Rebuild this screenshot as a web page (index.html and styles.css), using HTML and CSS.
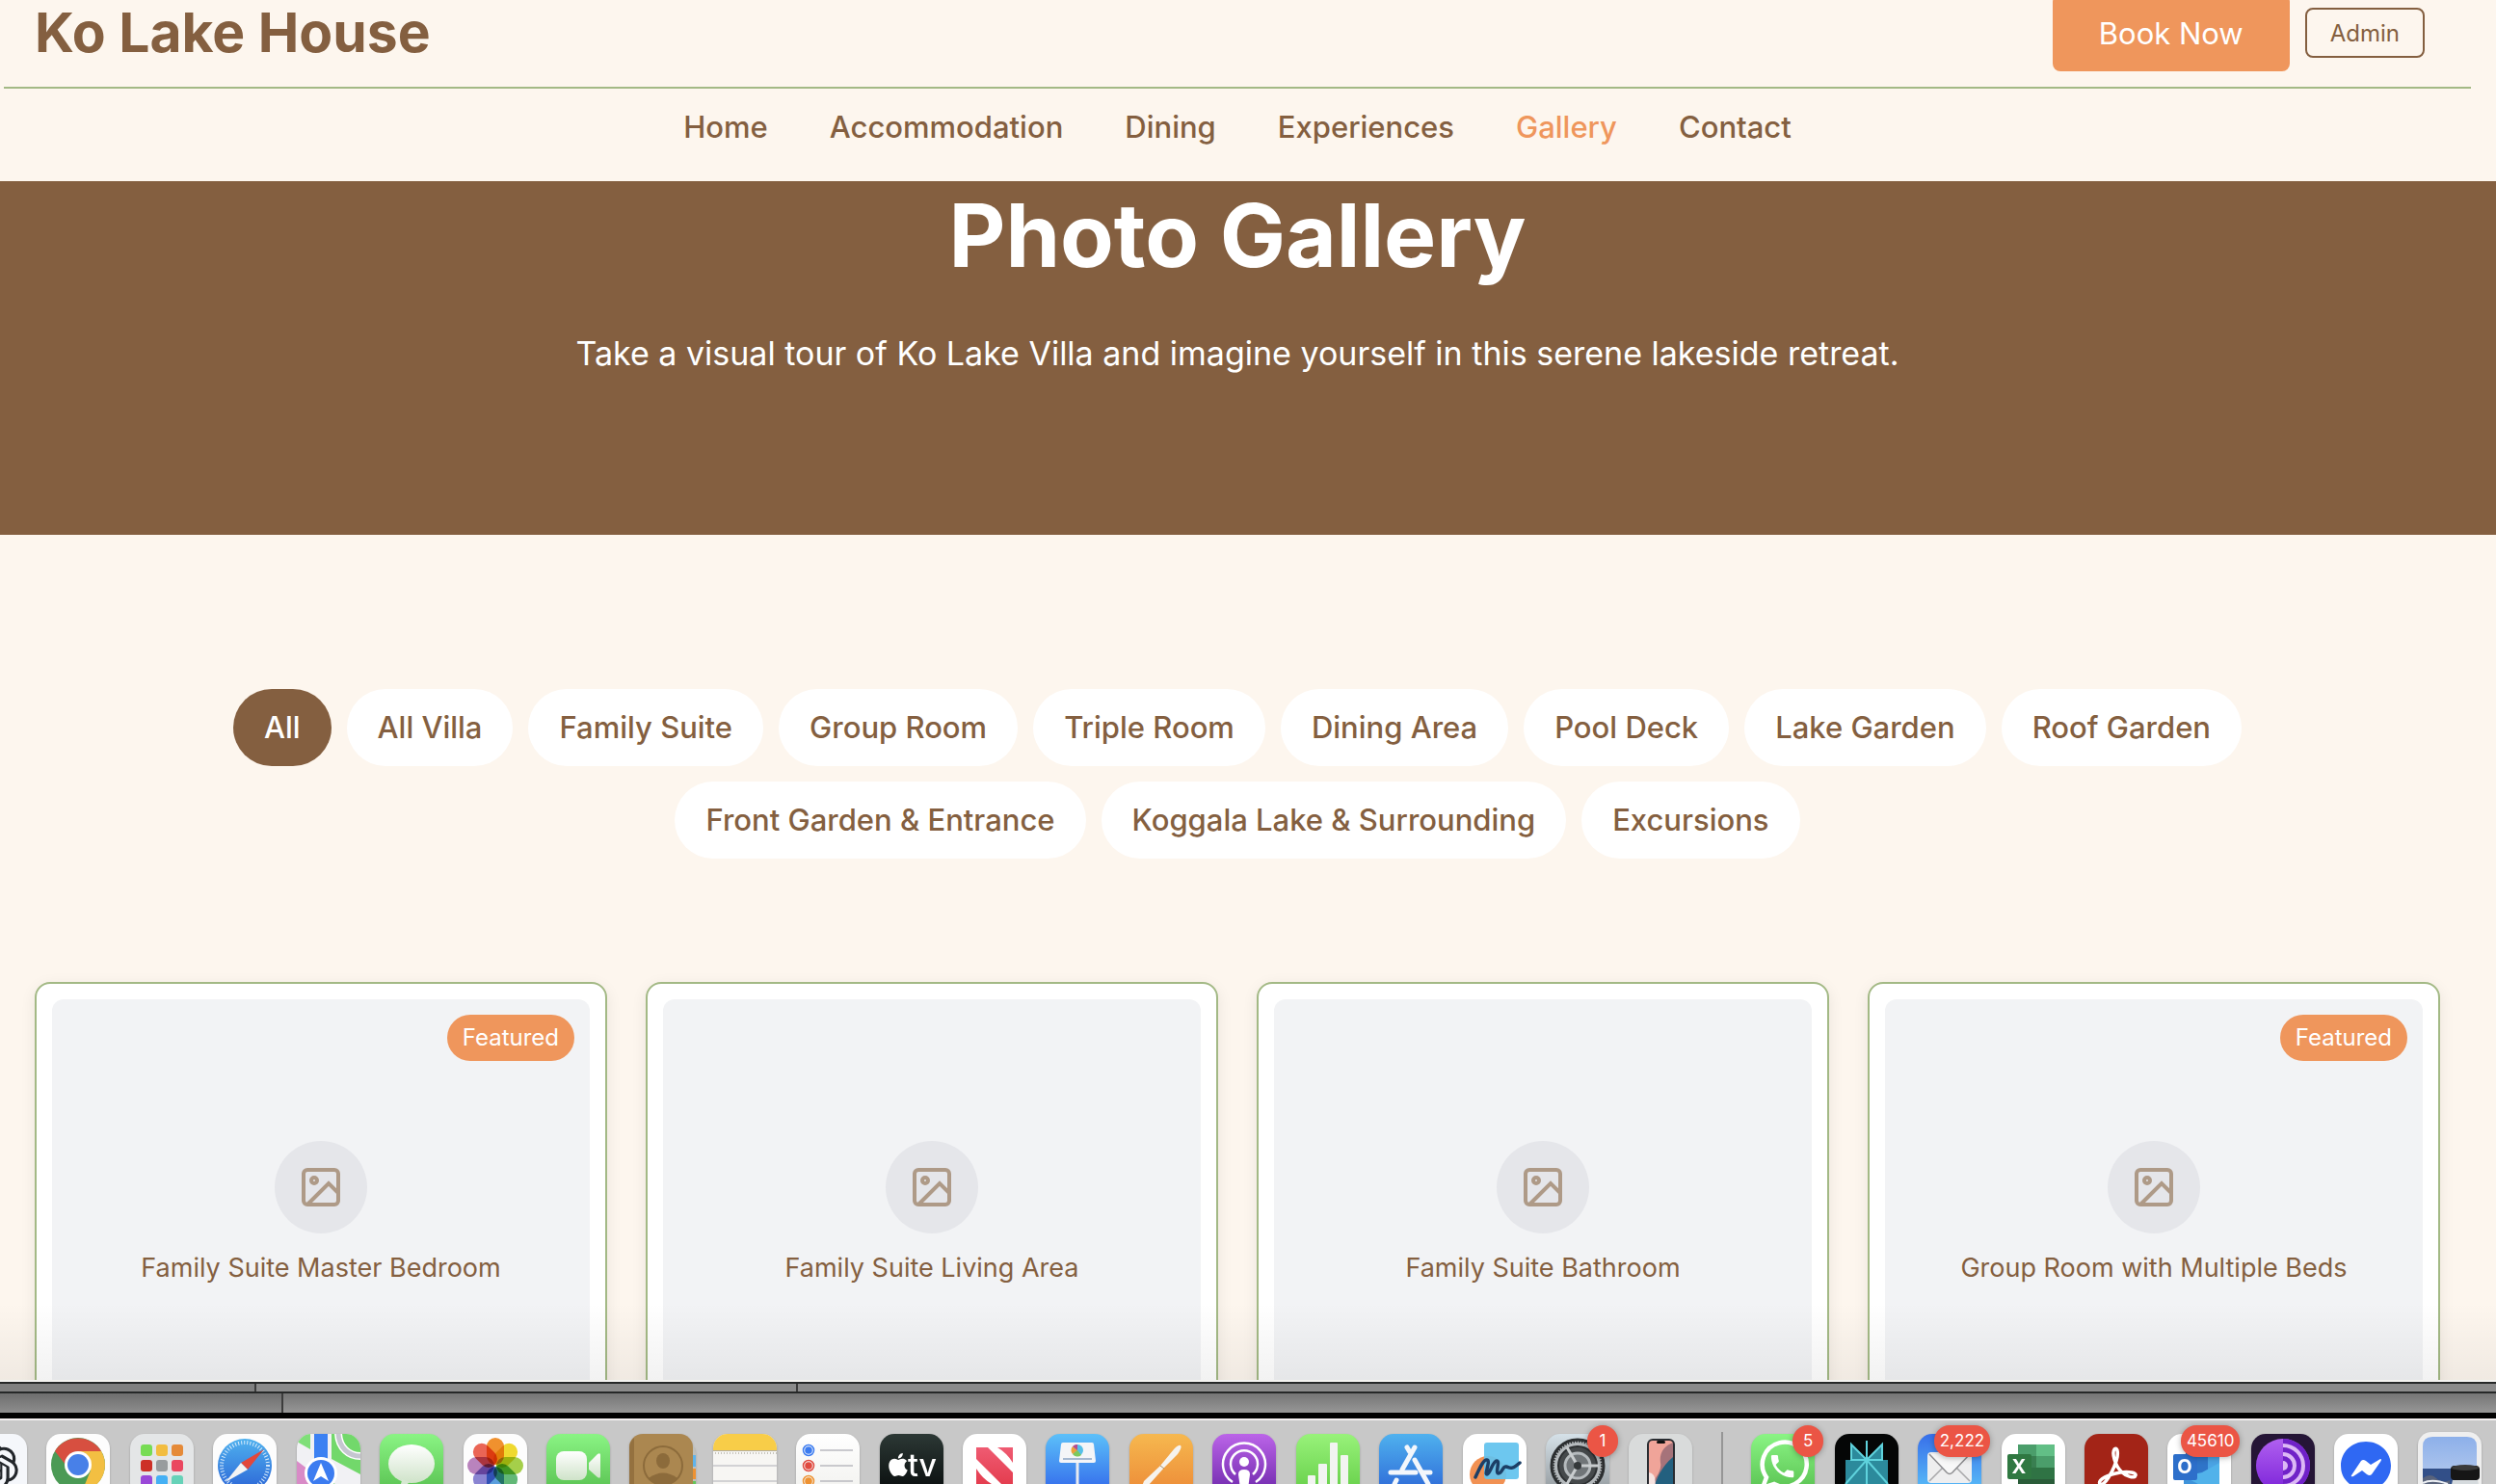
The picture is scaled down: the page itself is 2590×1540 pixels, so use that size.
FILE: index.html
```html
<!DOCTYPE html>
<html lang="en">
<head>
<meta charset="utf-8">
<meta name="viewport" content="width=device-width, initial-scale=1">
<title>Photo Gallery - Ko Lake House</title>
<link rel="stylesheet" href="styles.css">
</head>
<body>
<svg class="defs" aria-hidden="true">
  <defs>
    <linearGradient id="green" x2="0" y2="1"><stop stop-color="#8af484"/><stop offset="1" stop-color="#55bd4d"/></linearGradient>
    <linearGradient id="sky" x2="0" y2="1"><stop stop-color="#5cc0f9"/><stop offset="1" stop-color="#2f62ea"/></linearGradient>
    <linearGradient id="store" x2="0" y2="1"><stop stop-color="#4fb1ee"/><stop offset="1" stop-color="#2b63d6"/></linearGradient>
    <linearGradient id="mail" x2="0" y2="1"><stop stop-color="#386fe9"/><stop offset="1" stop-color="#5cc6fa"/></linearGradient>
    <linearGradient id="orange" x2="0" y2="1"><stop stop-color="#f6b84f"/><stop offset="1" stop-color="#ec8836"/></linearGradient>
    <linearGradient id="purple" x2="0" y2="1"><stop stop-color="#bb64e8"/><stop offset="1" stop-color="#6a25a8"/></linearGradient>
    <linearGradient id="steel" x2="0" y2="1"><stop stop-color="#d5e1e8"/><stop offset="1" stop-color="#8e9498"/></linearGradient>
    <linearGradient id="night" x2="0" y2="1"><stop stop-color="#2c3835"/><stop offset="1" stop-color="#060a0a"/></linearGradient>
    <linearGradient id="paper" x2="0" y2="1"><stop stop-color="#fff"/><stop offset="1" stop-color="#f1f1ee"/></linearGradient>
    <linearGradient id="silver" x2="0" y2="1"><stop stop-color="#fff"/><stop offset="1" stop-color="#cfe3c9"/></linearGradient>
    <linearGradient id="lime" x2="0" y2="1"><stop stop-color="#98f27a"/><stop offset="1" stop-color="#62cc45"/></linearGradient>
    <linearGradient id="tor" x2="0" y2="1"><stop stop-color="#b060f0"/><stop offset="1" stop-color="#7b22d8"/></linearGradient>
    <linearGradient id="red" x2="0" y2="1"><stop stop-color="#ef5b72"/><stop offset="1" stop-color="#e43d4f"/></linearGradient>
    <linearGradient id="photo" x2="0" y2="1"><stop stop-color="#8db0ea"/><stop offset="1" stop-color="#c3d3ee"/></linearGradient>
    <clipPath id="tile"><rect width="66" height="66" rx="15"/></clipPath>
  </defs>
</svg>

<div class="page">
  <header class="header">
    <div class="topbar">
      <a class="brand" href="#">Ko Lake House</a>
      <div class="actions">
        <button class="book" type="button">Book Now</button>
        <button class="admin" type="button">Admin</button>
      </div>
    </div>
    <nav class="nav">
      <a href="#">Home</a>
      <a href="#">Accommodation</a>
      <a href="#">Dining</a>
      <a href="#">Experiences</a>
      <a class="current" href="#">Gallery</a>
      <a href="#">Contact</a>
    </nav>
  </header>

  <section class="hero">
    <h1>Photo Gallery</h1>
    <p>Take a visual tour of Ko Lake Villa and imagine yourself in this serene lakeside retreat.</p>
  </section>

  <main class="gallery">
    <div class="filters">
      <button class="pill active" type="button">All</button>
      <button class="pill" type="button">All Villa</button>
      <button class="pill" type="button">Family Suite</button>
      <button class="pill" type="button">Group Room</button>
      <button class="pill" type="button">Triple Room</button>
      <button class="pill" type="button">Dining Area</button>
      <button class="pill" type="button">Pool Deck</button>
      <button class="pill" type="button">Lake Garden</button>
      <button class="pill" type="button">Roof Garden</button>
      <button class="pill" type="button">Front Garden &amp; Entrance</button>
      <button class="pill" type="button">Koggala Lake &amp; Surrounding</button>
      <button class="pill" type="button">Excursions</button>
    </div>
    <div class="cards">
      <article class="card">
        <div class="frame">
          <span class="featured">Featured</span>
          <span class="disc"><svg viewBox="0 0 24 24"><rect x="3" y="3" width="18" height="18" rx="2"/><circle cx="8.500" cy="8.500" r="1.500"/><path d="M21 15l-5-5L5 21"/></svg></span>
          <p>Family Suite Master Bedroom</p>
        </div>
      </article>
      <article class="card">
        <div class="frame">
          <span class="disc"><svg viewBox="0 0 24 24"><rect x="3" y="3" width="18" height="18" rx="2"/><circle cx="8.500" cy="8.500" r="1.500"/><path d="M21 15l-5-5L5 21"/></svg></span>
          <p>Family Suite Living Area</p>
        </div>
      </article>
      <article class="card">
        <div class="frame">
          <span class="disc"><svg viewBox="0 0 24 24"><rect x="3" y="3" width="18" height="18" rx="2"/><circle cx="8.500" cy="8.500" r="1.500"/><path d="M21 15l-5-5L5 21"/></svg></span>
          <p>Family Suite Bathroom</p>
        </div>
      </article>
      <article class="card">
        <div class="frame">
          <span class="featured">Featured</span>
          <span class="disc"><svg viewBox="0 0 24 24"><rect x="3" y="3" width="18" height="18" rx="2"/><circle cx="8.500" cy="8.500" r="1.500"/><path d="M21 15l-5-5L5 21"/></svg></span>
          <p>Group Room with Multiple Beds</p>
        </div>
      </article>
    </div>
  </main>
</div>

<div class="edges">
  <div class="edge back"><span></span><span></span><span></span></div>
  <div class="edge front"><span></span><span></span></div>
</div>

<footer class="dock">
  <button class="app" type="button" aria-label="ChatGPT"><svg viewBox="0 0 66 66"><rect width="66" height="66" rx="15" fill="#f5f7fb"/><g transform="translate(9 10) scale(2)"><path fill="#22262b" d="M22.2819 9.8211a5.9847 5.9847 0 0 0-.5157-4.9108 6.0462 6.0462 0 0 0-6.5098-2.9A6.0651 6.0651 0 0 0 4.9807 4.1818a5.9847 5.9847 0 0 0-3.9977 2.9 6.0462 6.0462 0 0 0 .7427 7.0966 5.98 5.98 0 0 0 .511 4.9107 6.051 6.051 0 0 0 6.5146 2.9001A5.9847 5.9847 0 0 0 13.2599 24a6.0557 6.0557 0 0 0 5.7718-4.2058 5.9894 5.9894 0 0 0 3.9977-2.9001 6.0557 6.0557 0 0 0-.7475-7.0729zm-9.022 12.6081a4.4755 4.4755 0 0 1-2.8764-1.0408l.1419-.0804 4.7783-2.7582a.7948.7948 0 0 0 .3927-.6813v-6.7369l2.02 1.1686a.071.071 0 0 1 .038.052v5.5826a4.504 4.504 0 0 1-4.4945 4.4944zm-9.6607-4.1254a4.4708 4.4708 0 0 1-.5346-3.0137l.142.0852 4.783 2.7582a.7712.7712 0 0 0 .7806 0l5.8428-3.3685v2.3324a.0804.0804 0 0 1-.0332.0615L9.74 19.9502a4.4992 4.4992 0 0 1-6.1408-1.6464zM2.3408 7.8956a4.485 4.485 0 0 1 2.3655-1.9728V11.6a.7664.7664 0 0 0 .3879.6765l5.8144 3.3543-2.0201 1.1685a.0757.0757 0 0 1-.071 0l-4.8303-2.7865A4.504 4.504 0 0 1 2.3408 7.872zm16.5963 3.8558L13.1038 8.364 15.1192 7.2a.0757.0757 0 0 1 .071 0l4.8303 2.7913a4.4944 4.4944 0 0 1-.6765 8.1042v-5.6772a.79.79 0 0 0-.407-.667zm2.0107-3.0231l-.142-.0852-4.7735-2.7818a.7759.7759 0 0 0-.7854 0L9.409 9.2297V6.8974a.0662.0662 0 0 1 .0284-.0615l4.8303-2.7866a4.4992 4.4992 0 0 1 6.6802 4.66zM8.3065 12.863l-2.02-1.1638a.0804.0804 0 0 1-.038-.0567V6.0742a4.4992 4.4992 0 0 1 7.3757-3.4537l-.142.0805L8.704 5.459a.7948.7948 0 0 0-.3927.6813zm1.0976-2.3654l2.602-1.4998 2.6069 1.4998v2.9994l-2.5974 1.4997-2.6067-1.4997Z"/></g></svg></button>
  <button class="app" type="button" aria-label="Chrome"><svg viewBox="0 0 66 66"><rect width="66" height="66" rx="15" fill="#fdfdfd"/><circle cx="33" cy="32" r="28" fill="#4b9a55"/><path d="M9 18A28 28 0 0 1 57 18H33L20 32z" fill="#d74f40"/><path d="M57 18A28 28 0 0 1 37 60L46 38 33 18z" fill="#f3bf42"/><circle cx="33" cy="32" r="14" fill="#fff"/><circle cx="33" cy="32" r="11" fill="#4880e8"/></svg></button>
  <button class="app" type="button" aria-label="Launchpad"><svg viewBox="0 0 66 66"><rect width="66" height="66" rx="15" fill="#e4e6e7"/><g><rect x="11" y="11" width="12" height="12" rx="3" fill="#77dc54"/><rect x="27" y="11" width="12" height="12" rx="3" fill="#f2bd40"/><rect x="43" y="11" width="12" height="12" rx="3" fill="#e58a38"/><rect x="11" y="27" width="12" height="12" rx="3" fill="#cd3027"/><rect x="27" y="27" width="12" height="12" rx="3" fill="#989c9e"/><rect x="43" y="27" width="12" height="12" rx="3" fill="#ea4760"/><rect x="11" y="43" width="12" height="12" rx="3" fill="#9a48d8"/><rect x="27" y="43" width="12" height="12" rx="3" fill="#45b0f4"/><rect x="43" y="43" width="12" height="12" rx="3" fill="#66d2b8"/></g></svg></button>
  <button class="app" type="button" aria-label="Safari"><svg viewBox="0 0 66 66"><rect width="66" height="66" rx="15" fill="#fdfdfd"/><circle cx="33" cy="33" r="28" fill="url(#store)"/><circle cx="33" cy="33" r="24" fill="none" stroke="#d9ecfb" stroke-width="4" stroke-dasharray="1 2.100"/><path d="M53 16L29 30l7 7z" fill="#e2473b"/><path d="M13 50l16-20 7 7z" fill="#f4f4f4"/></svg></button>
  <button class="app" type="button" aria-label="Maps"><svg viewBox="0 0 66 66"><g clip-path="url(#tile)"><rect width="66" height="66" fill="#f1f1f4"/><path d="M0 8L14 16V0H0z" fill="#7fdf78"/><path d="M36 0h30v42L36 26z" fill="#72d86b"/><path d="M0 28l16 12-2 26H0z" fill="#d88bc7"/><path d="M43-2C43 14 54 24 68 23" fill="none" stroke="#fff" stroke-width="8"/><path d="M43-2C43 14 54 24 68 23" fill="none" stroke="#c5c6d0" stroke-width="5"/><rect x="18" width="14" height="30" fill="#3c81f2"/><path d="M36 50l30 16H36z" fill="#72d86b"/><circle cx="25" cy="41" r="17" fill="#fff"/><circle cx="25" cy="41" r="14" fill="#3c7cf0"/><path d="M25 30l8 19-8-5-8 5z" fill="#fff"/></g></svg></button>
  <button class="app" type="button" aria-label="Messages"><svg viewBox="0 0 66 66"><rect width="66" height="66" rx="15" fill="url(#green)"/><ellipse cx="33" cy="31" rx="24" ry="20" fill="url(#silver)"/><path d="M23 47q0 6-5 9 8 0 13-6z" fill="#d6e8d2"/></svg></button>
  <button class="app" type="button" aria-label="Photos"><svg viewBox="0 0 66 66"><rect width="66" height="66" rx="15" fill="#fdfdfd"/><g class="petals"><rect x="24" y="4" width="18" height="28" rx="9" fill="#f0912e"/><rect x="24" y="4" width="18" height="28" rx="9" fill="#efd92f" transform="rotate(45 33 33)"/><rect x="24" y="4" width="18" height="28" rx="9" fill="#a5cf4a" transform="rotate(90 33 33)"/><rect x="24" y="4" width="18" height="28" rx="9" fill="#62b877" transform="rotate(135 33 33)"/><rect x="24" y="4" width="18" height="28" rx="9" fill="#5b9fdd" transform="rotate(180 33 33)"/><rect x="24" y="4" width="18" height="28" rx="9" fill="#8a84d2" transform="rotate(225 33 33)"/><rect x="24" y="4" width="18" height="28" rx="9" fill="#b983bd" transform="rotate(270 33 33)"/><rect x="24" y="4" width="18" height="28" rx="9" fill="#ea6555" transform="rotate(315 33 33)"/></g></svg></button>
  <button class="app" type="button" aria-label="FaceTime"><svg viewBox="0 0 66 66"><rect width="66" height="66" rx="15" fill="url(#green)"/><rect x="10" y="18" width="32" height="30" rx="8" fill="url(#silver)"/><path d="M44 30l9-9q3-2 3 1v22q0 3-3 1l-9-8z" fill="url(#silver)"/></svg></button>
  <button class="app" type="button" aria-label="Contacts"><svg viewBox="0 0 66 66"><path d="M60 10q9 2 9 10v46h-9z" fill="#c0c0ba"/><path d="M64 22h5v12h-5z" fill="#5fb4ec"/><path d="M64 36h5v11h-5z" fill="#ee9232"/><path d="M64 49h5v12h-5z" fill="#64c65b"/><rect width="66" height="66" rx="14" fill="#ab8750"/><path d="M5 4v62H0V15Q0 8 5 4z" fill="#94713f"/><circle cx="35" cy="33" r="20" fill="none" stroke="#8c6b3b" stroke-width="2"/><ellipse cx="35" cy="28" rx="7" ry="8" fill="#8c6b3b"/><path d="M20 46q15-11 30 0-6 8-15 8t-15-8z" fill="#8c6b3b"/></svg></button>
  <button class="app" type="button" aria-label="Notes"><svg viewBox="0 0 66 66"><g clip-path="url(#tile)"><rect width="66" height="66" fill="#f7f6f3"/><rect width="66" height="17" fill="#f8cd48"/><path d="M0 17.500h66" stroke="#b3aea0"/><path d="M2 20h64" stroke="#c6c3ba" stroke-width="2" stroke-dasharray="1 2"/><path d="M0 33h66M0 49h66" stroke="#d2d2d4" stroke-width="2"/></g></svg></button>
  <button class="app" type="button" aria-label="Reminders"><svg viewBox="0 0 66 66"><rect width="66" height="66" rx="15" fill="url(#paper)"/><path d="M25 17h34M25 33h34M25 49h34" stroke="#b9b9c0" stroke-width="1.500"/><g fill="none" stroke-width="1.500"><circle cx="13" cy="17" r="5.500" stroke="#3b7bf0"/><circle cx="13" cy="33" r="5.500" stroke="#e04a40"/><circle cx="13" cy="49" r="5.500" stroke="#ee9232"/></g><circle cx="13" cy="17" r="3.800" fill="#3b7bf0"/><circle cx="13" cy="33" r="3.800" fill="#e04a40"/><circle cx="13" cy="49" r="3.800" fill="#ee9232"/></svg></button>
  <button class="app" type="button" aria-label="Apple TV"><svg viewBox="0 0 66 66"><rect width="66" height="66" rx="15" fill="url(#night)"/><path transform="translate(7 20)" fill="#fff" d="M12.152 6.896c-.948 0-2.415-1.078-3.96-1.040-2.040.027-3.910 1.183-4.961 3.014-2.117 3.675-.546 9.103 1.519 12.090 1.013 1.454 2.208 3.090 3.792 3.039 1.520-.065 2.090-.987 3.935-.987 1.831 0 2.350.987 3.960.948 1.637-.026 2.676-1.480 3.676-2.948 1.156-1.688 1.636-3.325 1.662-3.415-.039-.013-3.182-1.221-3.220-4.857-.026-3.040 2.480-4.494 2.597-4.559-1.429-2.090-3.623-2.324-4.390-2.376-2-.156-3.675 1.090-4.610 1.090zM15.530 3.830c.843-1.012 1.400-2.427 1.245-3.830-1.207.052-2.662.805-3.532 1.818-.780.896-1.454 2.338-1.273 3.714 1.338.104 2.715-.688 3.560-1.701"/><text x="29" y="44" class="glyph tv">tv</text></svg></button>
  <button class="app" type="button" aria-label="News"><svg viewBox="0 0 66 66"><rect width="66" height="66" rx="15" fill="#fff"/><path d="M14 14h12l26 26v12H40L14 26zM36 14h16v16Q46 20 36 14zM14 36q6 10 16 16H14z" fill="url(#red)"/></svg></button>
  <button class="app" type="button" aria-label="Keynote"><svg viewBox="0 0 66 66"><rect width="66" height="66" rx="15" fill="url(#sky)"/><path d="M18 9h30q2 0 2 2l2 17q0 2-2 2H16q-2 0-2-2l2-17q0-2 2-2z" fill="#f4f5f8"/><path d="M18 26h30" stroke="#8ba3c4" stroke-width="1.500"/><rect x="31.500" y="30" width="3" height="36" fill="#e8eaf0"/><circle cx="33" cy="17" r="6" fill="#55bfe8"/><path d="M33 17l-5 4a6 6 0 0 0 9 1z" fill="#7dc95e"/><path d="M33 17l-5 4a6 6 0 0 1 0-8z" fill="#eda13a"/><path d="M33 17l-5-4a6 6 0 0 1 5-2z" fill="#b84a8e"/></svg></button>
  <button class="app" type="button" aria-label="Pages"><svg viewBox="0 0 66 66"><rect width="66" height="66" rx="15" fill="url(#orange)"/><path d="M53 12q2 2-3 9L36 35 20 53l-9 7 4-11 17-16 14-17q5-5 7-4z" fill="#f6f3ee"/><path d="M32 33l4 3" stroke="#a98f6d"/></svg></button>
  <button class="app" type="button" aria-label="Podcasts"><svg viewBox="0 0 66 66"><rect width="66" height="66" rx="15" fill="url(#purple)"/><g fill="none" stroke="#fff" stroke-width="2.500"><path d="M21 50a22 22 0 1 1 24 0"/><path d="M24 42a14 14 0 1 1 18 0"/></g><circle cx="33" cy="29" r="5" fill="#fff"/><path d="M27 42q0-5 6-5t6 5l-2 15q-1 4-4 4t-4-4z" fill="#fff"/></svg></button>
  <button class="app" type="button" aria-label="Numbers"><svg viewBox="0 0 66 66"><rect width="66" height="66" rx="15" fill="url(#lime)"/><g fill="#f2f4f1"><rect x="12" y="43" width="8" height="20" rx="1"/><rect x="23" y="31" width="9" height="32" rx="1"/><rect x="35" y="9" width="8" height="54" rx="1"/><rect x="46" y="22" width="8" height="41" rx="1"/></g></svg></button>
  <button class="app" type="button" aria-label="App Store"><svg viewBox="0 0 66 66"><rect width="66" height="66" rx="15" fill="url(#store)"/><g stroke="#f3f7fc" stroke-width="5" stroke-linecap="round"><path d="M12 40h26M45 40h8"/><path d="M37 14L24 37M18 48l-2 4M29 14l3 5M37 27l14 25"/></g></svg></button>
  <button class="app" type="button" aria-label="Freeform"><svg viewBox="0 0 66 66"><rect width="66" height="66" rx="15" fill="#fff"/><circle cx="26" cy="42" r="19" fill="#f19153"/><rect x="22" y="9" width="36" height="38" rx="3" fill="#62c3ee" opacity=".93"/><path d="M13 45C18 34 22 26 25 27c4 1-3 15 0 15s6-14 10-14-2 13 2 13 4-8 8-7 5 4 14-4" fill="none" stroke="#1c3f66" stroke-width="3.500" stroke-linecap="round"/></svg></button>
  <button class="app" type="button" aria-label="System Settings"><svg viewBox="0 0 66 66"><rect width="66" height="66" rx="15" fill="url(#steel)"/><circle cx="33" cy="33" r="27" fill="#b4b9bc" stroke="#2c2f31" stroke-width="3"/><circle cx="33" cy="33" r="26" fill="none" stroke="#2c2f31" stroke-width="4" stroke-dasharray="1.500 1.500"/><circle cx="33" cy="33" r="20" fill="#45494b" stroke="#2c2f31" stroke-width="2"/><circle cx="33" cy="33" r="13" fill="#707578" stroke="#b5babd" stroke-width="3"/><path d="M33 33h22M33 33L22 14M33 33L22 52" stroke="#c8ccce" stroke-width="3"/><circle cx="33" cy="33" r="4" fill="#34383a"/></svg><span class="badge">1</span></button>
  <button class="app" type="button" aria-label="iPhone Mirroring"><svg viewBox="0 0 66 66"><rect width="66" height="66" rx="15" fill="#d9dbdb"/><rect x="20" y="6" width="27" height="56" rx="5" fill="#f0a499" stroke="#292c31" stroke-width="2"/><path d="M46 9Q31 15 33 30q2 8-9 21v11h22z" fill="#a6737a"/><path d="M46 24Q34 34 28 50l-4 12h22z" fill="#23607f"/><path d="M21 40q10 2 5 20h-5z" fill="#f7e3e0"/><rect x="29" y="7" width="9" height="3" rx="1.500" fill="#111"/></svg></button>
  <span class="divider"></span>
  <button class="app" type="button" aria-label="WhatsApp"><svg viewBox="0 0 66 66"><rect width="66" height="66" rx="15" fill="url(#green)"/><path d="M12 56l4-11a23 23 0 1 1 8 7z" fill="none" stroke="#fff" stroke-width="4.500"/><path transform="translate(17 18) scale(1.300)" fill="#fff" d="M6.620 10.790c1.440 2.830 3.760 5.140 6.590 6.590l2.200-2.200c.270-.270.670-.360 1.020-.240 1.120.370 2.330.570 3.570.570.550 0 1 .450 1 1V20c0 .550-.450 1-1 1-9.390 0-17-7.610-17-17 0-.550.450-1 1-1h3.500c.550 0 1 .450 1 1 0 1.250.200 2.450.570 3.570.110.350.030.740-.250 1.020l-2.200 2.200z"/></svg><span class="badge">5</span></button>
  <button class="app" type="button" aria-label="Perplexity"><svg viewBox="0 0 66 66"><rect width="66" height="66" rx="15" fill="#050606"/><path d="M17 11l16 16 16-16v16h6v28H44v8L33 52 22 63v-8H11V27h6z" fill="#2c8a9c"/><g fill="none" stroke="#5fd3dd" stroke-width="2"><path d="M33 7v59M17 11l16 16 16-16v16H17zM33 27L11 52M33 27l22 25"/></g></svg></button>
  <button class="app" type="button" aria-label="Mail"><svg viewBox="0 0 66 66"><rect width="66" height="66" rx="15" fill="url(#mail)"/><rect x="10" y="19" width="46" height="32" rx="4" fill="#eeeeef"/><path d="M12 49l15-15M54 49L39 34" stroke="#a8a8aa" stroke-width="1.500"/><path d="M12 21l18 19q3 3 6 0l18-19" fill="#f8f8f8" stroke="#8d8d90" stroke-width="1.500"/></svg><span class="badge">2,222</span></button>
  <button class="app" type="button" aria-label="Excel"><svg viewBox="0 0 66 66"><rect width="66" height="66" rx="15" fill="#fff"/><rect x="17" y="11" width="38" height="48" rx="2" fill="#2f7344"/><path d="M17 11h19v12H17z" fill="#4b9e6b"/><path d="M36 11h19v12H36z" fill="#62bf86"/><path d="M17 23h19v12H17z" fill="#397f51"/><path d="M36 23h19v12H36z" fill="#4b9e6b"/><path d="M17 47h38v12H17z" fill="#2a5c39"/><rect x="6" y="21" width="25" height="26" rx="2" fill="#2f7841"/><text x="18" y="41" class="glyph letter">X</text></svg></button>
  <button class="app" type="button" aria-label="Acrobat"><svg viewBox="0 0 66 66"><rect width="66" height="66" rx="15" fill="#a32417"/><path d="M16 52c-3-5 10-10 21-12 9-1 17 0 16 3-1 4-10 1-15-4-6-6-10-19-7-23 4-3 4 6 2 12-3 10-13 28-17 24z" fill="none" stroke="#fff" stroke-width="3.500"/></svg></button>
  <button class="app" type="button" aria-label="Outlook"><svg viewBox="0 0 66 66"><rect width="66" height="66" rx="15" fill="#fff"/><rect x="19" y="8" width="30" height="40" fill="#2a66b8"/><path d="M30 23h24v22H30z" fill="#4ba3e4"/><path d="M30 23h12v20H30z" fill="#2f74c8"/><path d="M17 44l19-4 18-10v36H17z" fill="#51b2ea"/><path d="M17 44l37 20H17z" fill="#3f93da"/><rect x="6" y="21" width="25" height="27" rx="2" fill="#2d6fca"/><text x="18" y="41" class="glyph letter">O</text></svg><span class="badge">45610</span></button>
  <button class="app" type="button" aria-label="Tor Browser"><svg viewBox="0 0 66 66"><rect width="66" height="66" rx="15" fill="#251536"/><circle cx="33" cy="33" r="28" fill="url(#tor)"/><path d="M33 5a28 28 0 0 1 0 56z" fill="#7022c8"/><g fill="none" stroke="#dcb8f5" stroke-width="4"><path d="M33 12a21 21 0 0 1 0 42M33 21a12 12 0 0 1 0 24"/></g><path d="M33 28a5 5 0 0 1 0 10z" fill="#dcb8f5"/></svg></button>
  <button class="app" type="button" aria-label="Messenger"><svg viewBox="0 0 66 66"><rect width="66" height="66" rx="15" fill="#fff"/><path d="M33 8c15 0 26 11 26 25S48 58 33 58q-5 0-9-1l-8 4v-9C10 47 7 41 7 33 7 19 18 8 33 8z" fill="#2f68f3"/><path d="M18 43l10-15q2-2 5 0l5 4 10-6q2 0 0 3L39 42q-2 2-5 0l-5-4-9 6q-3 1-2-1z" fill="#fff"/></svg></button>
  <button class="app" type="button" aria-label="Preview"><svg viewBox="0 0 66 66"><rect y="-2" width="66" height="70" rx="14" fill="#efefef"/><path d="M5 13Q5 3 15 3h36q10 0 10 10v53H5z" fill="url(#photo)"/><path d="M5 36h56v30H5z" fill="#324f88"/><path d="M5 46q8-6 14 0t14 2v18H5z" fill="#59637b"/><path d="M5 51q10-5 26 1" stroke="#eef1f5" stroke-width="2" fill="none"/><path d="M36 48h26l4 18H32z" fill="#d5dadd"/><rect x="34" y="33" width="30" height="15" rx="4" fill="#161616"/><ellipse cx="49" cy="35" rx="14" ry="3" fill="#3a3a3a"/></svg></button>
</footer>
</body>
</html>
```
FILE: styles.css
```css
:root {
  --cream: #fdf6ee;
  --brown: #845f40;
  --orange: #ef965c;
  --green: #a3b985;
}

* {
  box-sizing: border-box;
}

body {
  margin: 0;
  height: 100vh;
  display: flex;
  flex-direction: column;
  overflow: hidden;
  background: var(--cream);
  color: var(--brown);
  font-family: Inter, "Liberation Sans", sans-serif;
}

a {
  color: inherit;
  text-decoration: none;
}

button {
  font: inherit;
  color: inherit;
  border: 0;
  padding: 0;
  background: none;
}

p,
h1 {
  margin: 0;
}

.defs {
  position: absolute;
  width: 0;
  height: 0;
}

.page {
  position: relative;
  flex: 1;
  min-height: 0;
  overflow: hidden;
  border-bottom: 2px solid #f4f3f0;
}

.page::after {
  content: "";
  position: absolute;
  inset: auto 0 0;
  height: 80px;
  background: linear-gradient(transparent, rgba(0, 0, 0, 0.05));
}

.header {
  margin-top: -22px;
  padding: 0 26px 0 4px;
}

.topbar {
  display: flex;
  align-items: center;
  justify-content: space-between;
  padding: 16px 48px 16px 32px;
  border-bottom: 2px solid var(--green);
}

.brand {
  font-size: 57px;
  line-height: 80px;
  font-weight: 700;
}

.actions {
  display: flex;
  align-items: center;
  gap: 16px;
}

.book {
  height: 80px;
  padding: 0 48px;
  border-radius: 8px;
  background: var(--orange);
  color: #fff;
  font-size: 31px;
}

.admin {
  height: 52px;
  padding: 0 24px;
  border: 2px solid var(--brown);
  border-radius: 8px;
  font-size: 24px;
}

.nav {
  display: flex;
  justify-content: center;
  gap: 64px;
  padding: 16px 0 32px;
  font-size: 31px;
  line-height: 48px;
  font-weight: 500;
}

.nav .current {
  color: var(--orange);
}

.hero {
  padding: 8px 22px 162px 0;
  background: var(--brown);
  color: #fff;
  text-align: center;
}

.hero h1 {
  font-size: 91px;
  line-height: 96px;
  font-weight: 700;
}

.hero p {
  margin-top: 48px;
  font-size: 34px;
  line-height: 53px;
}

.gallery {
  padding: 160px 58px 0 36px;
}

.filters {
  display: flex;
  flex-wrap: wrap;
  justify-content: center;
  gap: 16px;
  padding: 0 200px;
}

.pill {
  padding: 0 32px;
  border-radius: 40px;
  background: #fff;
  font-size: 31px;
  line-height: 80px;
  font-weight: 500;
}

.pill.active {
  background: var(--brown);
  color: #fff;
}

.cards {
  display: grid;
  grid-template-columns: repeat(4, 1fr);
  gap: 40px;
  margin-top: 128px;
}

.card {
  padding: 16px;
  border: 2px solid var(--green);
  border-radius: 16px;
  background: #fff;
  box-shadow: 0 4px 16px rgba(0, 0, 0, 0.08);
}

.frame {
  position: relative;
  display: flex;
  flex-direction: column;
  align-items: center;
  justify-content: center;
  gap: 16px;
  aspect-ratio: 5 / 4;
  border-radius: 12px;
  background: #f2f3f5;
  font-size: 27px;
  line-height: 40px;
}

.featured {
  position: absolute;
  top: 16px;
  right: 16px;
  padding: 0 16px;
  border-radius: 24px;
  background: var(--orange);
  color: #fff;
  font-size: 24px;
  line-height: 48px;
}

.disc {
  display: grid;
  place-items: center;
  width: 96px;
  height: 96px;
  border-radius: 50%;
  background: #e5e6ea;
}

.disc svg {
  width: 48px;
  height: 48px;
  fill: none;
  stroke: #ae9a87;
  stroke-width: 2;
}

/* Lower edges of the windows behind */
.edge {
  display: flex;
  border-top: 2px solid #262828;
}

.edge span {
  border-right: 2px solid #3c3c3c;
}

.edge span:last-child {
  flex: 1;
  border-right: 0;
}

.back {
  height: 10px;
  background: #8b8b8b;
}

.back span:nth-child(1) {
  width: 266px;
  background: #808080;
}

.back span:nth-child(2) {
  width: 562px;
}

.front {
  height: 28px;
  border-bottom: 6px solid #020202;
  background: linear-gradient(#757575, #979797);
}

.front span:nth-child(1) {
  width: 294px;
  background: rgba(0, 0, 0, 0.06);
}

.dock {
  display: flex;
  justify-content: space-between;
  height: 68px;
  padding: 14px 15px 0 0;
  margin-left: -38px;
  border-top: 2px solid #f4f0f1;
  background: #c8c8c8;
  overflow: hidden;
}

.app {
  position: relative;
  flex: none;
  width: 66px;
  height: 66px;
}

.app svg {
  display: block;
  width: 66px;
  height: 66px;
  overflow: visible;
  filter: drop-shadow(0 1px 1px rgba(0, 0, 0, 0.2));
}

.petals {
  isolation: isolate;
}

.petals rect {
  mix-blend-mode: multiply;
}

.glyph {
  fill: #fff;
  font-family: Inter, sans-serif;
}

.tv {
  font-size: 32px;
  font-weight: 500;
}

.letter {
  font-size: 20px;
  font-weight: 700;
  text-anchor: middle;
}

.badge {
  position: absolute;
  top: -9px;
  right: -9px;
  min-width: 32px;
  padding: 0 6px;
  border-radius: 16px;
  background: #eb5545;
  box-shadow: 0 1px 6px rgba(0, 0, 0, 0.3);
  color: #fff;
  font-size: 17px;
  line-height: 33px;
  text-align: center;
}

.divider {
  width: 2px;
  height: 66px;
  margin: -2px 9px 0;
  background: #969696;
}
```
